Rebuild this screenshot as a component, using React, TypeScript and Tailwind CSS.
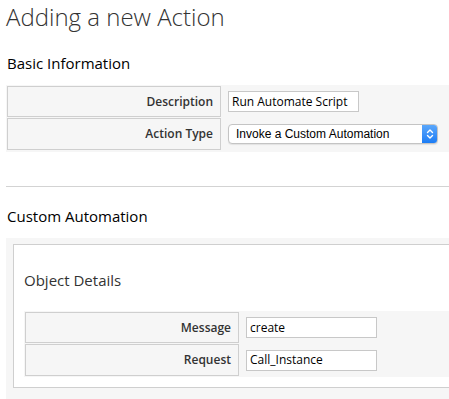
import React from "react";

const font = { fontFamily: '"Open Sans", "Liberation Sans", sans-serif' };

function Row({ label, children, h }: { label: string; children: React.ReactNode; h: string }) {
  return (
    <div className={`flex ${h}`}>
      <div className="w-[214px] shrink-0 border border-[#cfcfcf] flex items-center justify-end pr-[7px] text-[12px] font-semibold text-[#333]">
        {label}
      </div>
      <div className="flex items-center pl-[7px] grow">{children}</div>
    </div>
  );
}

function TextInput({ value }: { value: string }) {
  return (
    <div className="w-[131px] h-[21px] border border-[#c8c8c8] bg-white flex items-center pl-[3px] text-[12px] text-black leading-none">
      {value}
    </div>
  );
}

function Select({ value }: { value: string }) {
  return (
    <div className="w-[210px] h-[20px] rounded-[4px] border border-[#c4c4c4] bg-white flex items-center shadow-[0_1px_1px_rgba(0,0,0,0.08)] overflow-hidden">
      <span className="grow pl-[7px] text-[12px] text-black" style={{ fontFamily: '"Liberation Sans", Arial, sans-serif' }}>
        {value}
      </span>
      <span className="w-[15px] h-full bg-gradient-to-b from-[#5aa7fb] to-[#1a7cf5] flex items-center justify-center">
        <svg width="8" height="12" viewBox="0 0 8 12" fill="none" stroke="white" strokeWidth="1.4" strokeLinecap="round" strokeLinejoin="round">
          <path d="M1.5 4.5 L4 2 L6.5 4.5" />
          <path d="M1.5 7.5 L4 10 L6.5 7.5" />
        </svg>
      </span>
    </div>
  );
}

export default function App() {
  return (
    <div className="w-[449px] h-[399px] overflow-hidden bg-white text-[#333]" style={font}>
      <div className="pl-[6px] pt-[1px]">
        <h1 className="text-[24px] font-light leading-[32px] text-[#333]">Adding a new Action</h1>
        <h2 className="mt-[20px] text-[15px] leading-[20px] text-black pl-[1px]">Basic Information</h2>
        <div className="mt-[12px] bg-[#f6f6f6] pl-[1px] pt-[1px] pb-[2px] flex flex-col gap-[1px]">
          <Row label="Description" h="h-[31px]">
            <TextInput value="Run Automate Script" />
          </Row>
          <Row label="Action Type" h="h-[32px]">
            <Select value="Invoke a Custom Automation" />
          </Row>
        </div>
        <div className="mt-[34px] h-px bg-[#d3d3d3]" />
        <h2 className="mt-[19px] text-[15px] leading-[20px] text-black pl-[1px]">Custom Automation</h2>
        <div className="mt-[12px] bg-[#f6f6f6] pl-[7px] pt-[6px] pb-[12px]">
          <div className="border-l border-t border-b border-[#cfcfcf] bg-white pl-[10px] pt-[25px] pb-[10px]">
            <h3 className="text-[15px] leading-[20px] text-[#333]">Object Details</h3>
            <div className="mt-[21px] bg-[#f6f6f6] pl-[1px] pt-[1px] pb-[1px] flex flex-col gap-[1px]">
              <Row label="Message" h="h-[31px]">
                <TextInput value="create" />
              </Row>
              <Row label="Request" h="h-[32px]">
                <TextInput value="Call_Instance" />
              </Row>
            </div>
          </div>
        </div>
      </div>
    </div>
  );
}
